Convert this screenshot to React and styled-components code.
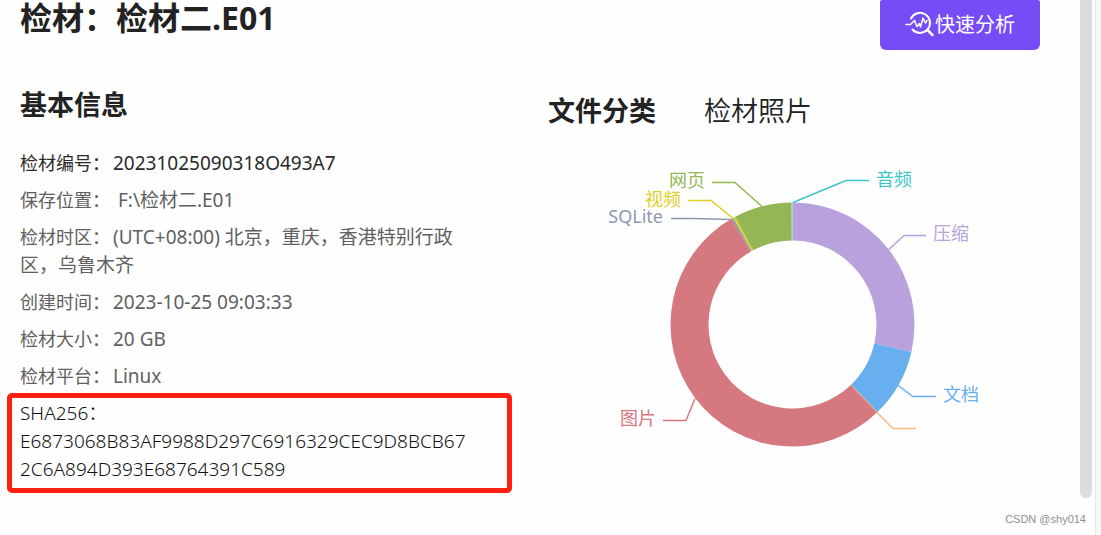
import React from "react";
import styled, { createGlobalStyle } from "styled-components";

const GlobalStyle = createGlobalStyle`
  * { box-sizing: border-box; }
  body {
    margin: 0;
    background: #fefefe;
    color: #222;
    font-family: "Noto Sans", "Noto Sans CJK SC", sans-serif;
  }
`;

const Page = styled.div`
  display: flex;
  min-height: 100vh;
`;

const Main = styled.main`
  flex: 1;
  min-width: 0;
  padding: 0 40px 0 20px;
`;

const Header = styled.header`
  display: flex;
  justify-content: space-between;
  align-items: flex-start;
`;

const Title = styled.h1`
  margin: 0;
  font-size: 32px;
  line-height: 36px;
  font-weight: 700;
`;

const AnalyzeButton = styled.button`
  display: flex;
  align-items: center;
  justify-content: center;
  width: 160px;
  height: 50px;
  padding: 0 0 4px;
  border: 0;
  border-radius: 2px 2px 6px 6px;
  background: #764cf6;
  color: #fff;
  font: inherit;
  font-size: 20px;
`;

const Columns = styled.div`
  display: grid;
  grid-template-columns: 1fr 1fr;
  gap: 36px;
`;

const InfoPanel = styled.section`
  padding-top: 37px;
`;

const ChartPanel = styled.section`
  padding-top: 43px;
`;

const Heading = styled.h2`
  margin: 0 0 26px;
  font-size: 27px;
  line-height: 36px;
  font-weight: 700;
`;

const Tabs = styled.div`
  display: flex;
  gap: 48px;
  margin-bottom: 31px;
`;

const Tab = styled.button`
  padding: 0;
  border: 0;
  background: none;
  color: #222;
  font: inherit;
  font-size: 27px;
  line-height: 36px;
  font-weight: ${(p) => (p["aria-selected"] ? 700 : 350)};
`;

const InfoList = styled.dl`
  display: flex;
  flex-direction: column;
  gap: 9px;
  margin: 0;
  font-size: 19px;
  line-height: 28px;
  font-weight: 400;
`;

const InfoRow = styled.div`
  padding-right: 44px;
  color: ${(p) => (p.$strong ? "#2a2a2a" : "#606060")};
`;

const HashRow = styled(InfoRow)`
  margin: -6px 0 0 -13px;
  padding: 1px 36px 5px 8px;
  border: 5px solid #ff2012;
  border-radius: 5px;
  color: #111;
  font-weight: 300;
`;

const Term = styled.dt`
  display: inline;
  font-size: ${(p) => (p.$large ? "19px" : "18px")};
`;

const Detail = styled.dd`
  display: ${(p) => (p.$block ? "block" : "inline")};
  margin: 0;
  margin-left: ${(p) => (p.$block ? "0" : "3px")};
  word-break: break-all;
  white-space: pre-wrap;
`;

const Chart = styled.svg`
  display: block;
  margin: 0 auto;
  font-size: 18px;
`;

const Scrollbar = styled.div`
  width: 16px;
  border-right: 1px solid #e6e6e6;
`;

const Thumb = styled.div`
  width: 12px;
  height: 93vh;
  border-radius: 0 0 6px 6px;
  background: #dcdcdc;
`;

const Edge = styled.div`
  width: 5px;
  background: #f8f8f8;
`;

const Watermark = styled.small`
  position: absolute;
  right: 15px;
  bottom: 8px;
  color: #8f8f8f;
  font-family: "Liberation Sans", sans-serif;
  font-size: 11px;
  line-height: 16px;
`;

const rows = [
  { term: "检材编号：", detail: "20231025090318O493A7", strong: true },
  { term: "保存位置：", detail: " F:\\检材二.E01" },
  { term: "检材时区：", detail: "(UTC+08:00) 北京，重庆，香港特别行政区，乌鲁木齐" },
  { term: "创建时间：", detail: "2023-10-25 09:03:33" },
  { term: "检材大小：", detail: "20 GB" },
  { term: "检材平台：", detail: "Linux" },
];

// Angles are degrees clockwise from the top of the ring.
const slices = [
  { from: 0, to: 103, color: "#b8a1dd" },
  { from: 103, to: 136, color: "#67afee" },
  { from: 136, to: 330, color: "#d5787f" },
  { from: 330, to: 331, color: "#8d98b3" },
  { from: 331, to: 332, color: "#ddd01e" },
  { from: 332, to: 359.5, color: "#95b654" },
  { from: 359.5, to: 360, color: "#74cfc4" },
];

const labels = [
  { text: "音频", color: "#3cc6c8", line: "1,-122 54,-144 77,-144", x: 84, y: -138 },
  { text: "压缩", color: "#b8a1dd", line: "97,-75 112,-89 134,-89", x: 141, y: -84 },
  { text: "文档", color: "#67afee", line: "106,61 121,72 144,72", x: 151, y: 77 },
  { text: "", color: "#ffb980", line: "85,88 101,104 124,104", x: 0, y: 0 },
  { text: "图片", color: "#d5787f", line: "-97,74 -106,96 -129,96", x: -136, y: 101, end: true },
  { text: "SQLite", color: "#8d98b3", line: "-61,-105 -98,-106 -121,-106", x: -129, y: -101, end: true },
  { text: "视频", color: "#ddd01e", line: "-59,-106 -81,-124 -104,-124", x: -111, y: -118, end: true },
  { text: "网页", color: "#95b654", line: "-30,-118 -57,-142 -80,-142", x: -87, y: -137, end: true },
];

const OUTER = 122;
const INNER = 84;

function point(radius, angle) {
  const rad = (angle * Math.PI) / 180;
  return `${radius * Math.sin(rad)} ${-radius * Math.cos(rad)}`;
}

function ringPath({ from, to }) {
  const large = to - from > 180 ? 1 : 0;
  return `M${point(OUTER, from)}A${OUTER} ${OUTER} 0 ${large} 1 ${point(OUTER, to)}L${point(INNER, to)}A${INNER} ${INNER} 0 ${large} 0 ${point(INNER, from)}Z`;
}

function AnalyzeIcon() {
  return (
    <svg width="30" height="28" viewBox="0 0 30 28" fill="none" stroke="#fff" strokeWidth="2" strokeLinecap="round" strokeLinejoin="round" aria-hidden="true">
      <path d="M6 9.5A10 10 0 1 1 7.5 20.5" />
      <path d="M22.5 21L27.5 26" strokeWidth="2.5" />
      <path d="M1 15.5H5.5L9.5 11.5L12 17.5L14.5 14.5L15.5 18L18 9L20.5 14L22 11.5" strokeWidth="1.5" />
    </svg>
  );
}

function FileChart() {
  return (
    <Chart width="380" height="300" viewBox="-188 -164 380 300" role="img" aria-label="文件分类">
      {slices.map((s) => (
        <path key={s.from} d={ringPath(s)} fill={s.color} transform="translate(.5 .5)" />
      ))}
      <path d={`M${point(INNER, 136)}L${point(OUTER, 136)}`} stroke="#ffb980" />
      {labels.map((l) => (
        <g key={l.color}>
          <polyline points={l.line} fill="none" stroke={l.color} strokeWidth="1.5" transform="translate(0 .5)" />
          {l.text && (
            <text x={l.x} y={l.y} fill={l.color} textAnchor={l.end ? "end" : "start"}>
              {l.text}
            </text>
          )}
        </g>
      ))}
    </Chart>
  );
}

export default function App() {
  return (
    <>
      <GlobalStyle />
      <Page>
        <Main>
          <Header>
            <Title>检材：检材二.E01</Title>
            <AnalyzeButton type="button">
              <AnalyzeIcon />
              快速分析
            </AnalyzeButton>
          </Header>
          <Columns>
            <InfoPanel>
              <Heading>基本信息</Heading>
              <InfoList>
                {rows.map((r) => (
                  <InfoRow key={r.term} $strong={r.strong}>
                    <Term>{r.term}</Term>
                    <Detail>{r.detail}</Detail>
                  </InfoRow>
                ))}
                <HashRow $strong>
                  <Term $large>SHA256：</Term>
                  <Detail $block>E6873068B83AF9988D297C6916329CEC9D8BCB672C6A894D393E68764391C589</Detail>
                </HashRow>
              </InfoList>
            </InfoPanel>
            <ChartPanel>
              <Tabs role="tablist">
                <Tab type="button" role="tab" aria-selected={true}>文件分类</Tab>
                <Tab type="button" role="tab" aria-selected={false}>检材照片</Tab>
              </Tabs>
              <FileChart />
            </ChartPanel>
          </Columns>
        </Main>
        <Scrollbar>
          <Thumb />
        </Scrollbar>
        <Edge />
        <Watermark>CSDN @shy014</Watermark>
      </Page>
    </>
  );
}
